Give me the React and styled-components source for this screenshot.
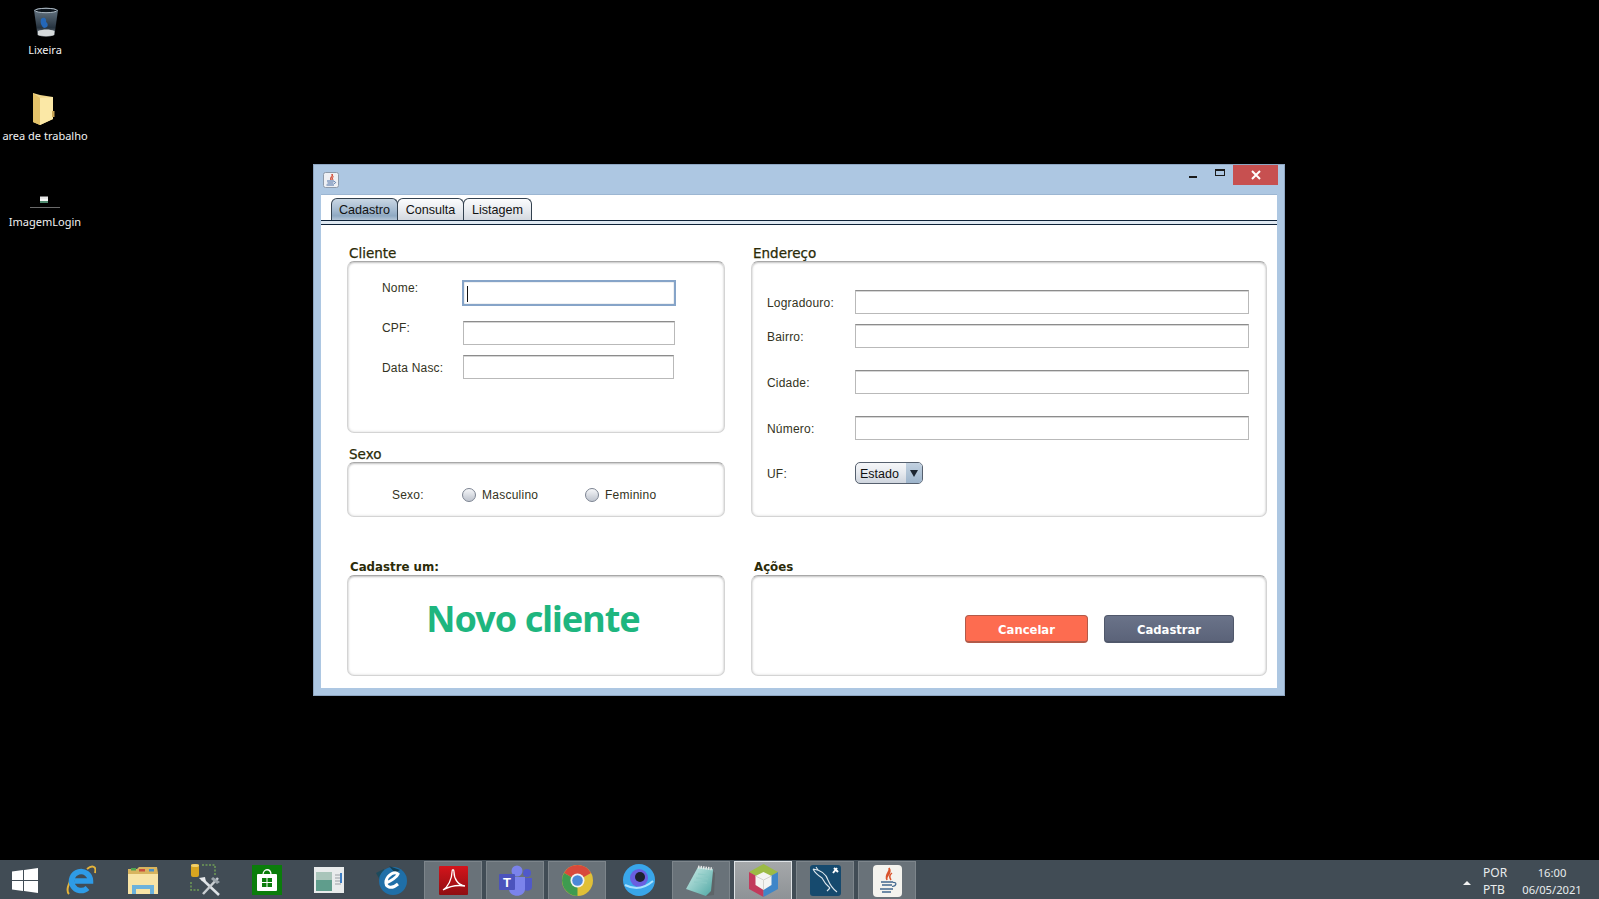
import React from "react";
import styled, { createGlobalStyle } from "styled-components";

const Global = createGlobalStyle`
  html, body { margin: 0; padding: 0; background: #000; overflow: hidden; }
  * { box-sizing: border-box; }
`;

const Screen = styled.div`
  width: 1599px; height: 899px; background: #000;
  display: flex; flex-direction: column;
  font-family: "Liberation Sans", Arial, sans-serif;
`;
const Desktop = styled.div`flex: 1; position: relative; min-height: 0;`;
const IconColumn = styled.div`display: flex; flex-direction: column; width: 90px;`;
const DesktopCell = styled.div`height: 86px; display: flex; flex-direction: column; align-items: center;`;
const DesktopArt = styled.div`
  height: 42px; width: 100%; display: flex; justify-content: center; align-items: flex-end;
  padding-bottom: ${p => p.$pb}px; padding-right: ${p => p.$pr || 0}px; padding-left: ${p => p.$pl || 0}px;
`;
const DesktopLabel = styled.div`
  color: #f2f2f2; font: 11px/16px "Noto Sans", sans-serif; white-space: nowrap;
`;

const Win = styled.div`
  position: absolute; left: 313px; top: 164px; width: 972px; height: 532px;
  background: #adc7e2; border: 1px solid #8ea6c2; display: flex; flex-direction: column;
`;
const TitleBar = styled.div`height: 29px; display: flex; padding-left: 9px; flex: none;`;
const TitleIcon = styled.div`margin-top: 7px; width: 16px; height: 15px;`;
const CaptionGroup = styled.div`margin-left: auto; margin-right: 6px; display: flex;`;
const Caption = styled.div`
  width: ${p => p.$w}px; height: 20px; display: flex; align-items: center; justify-content: center;
  background: ${p => p.$close ? "#c75050" : "transparent"};
`;
const MinGlyph = styled.span`width: 8px; height: 2px; background: #1a1a1a; margin-top: 4px;`;
const MaxGlyph = styled.span`width: 10px; height: 7px; border: 1px solid #1a1a1a; border-top-width: 2px; margin-bottom: 6px;`;

const Content = styled.div`
  flex: 1; margin: 0 7px 7px 7px; background: #fff; border-top: 1px solid #9cb6d2;
  display: flex; flex-direction: column; min-height: 0;
`;
const TabRow = styled.div`display: flex; padding: 3px 0 0 10px; height: 25px; flex: none;`;
const Tab = styled.div`
  height: 22px; width: ${p => p.$w}px; margin-left: ${p => p.$first ? 0 : -1}px;
  border: 1px solid #33414f; border-bottom: 0; border-radius: 6px 6px 0 0;
  font-size: 12.6px; line-height: 22px; text-align: center; color: #111;
  background: ${p => p.$active
    ? "linear-gradient(#c9d7e4, #a3b9cf 55%, #8fa9c2 80%, #b4c6d8)"
    : "linear-gradient(#fbfcfd, #e9ecf0 50%, #d3d8df)"};
`;
const TabBand = styled.div`
  height: 5px; flex: none; background: #dfe8f1;
  border-top: 1px solid #0e2238; border-bottom: 1px solid #0e2238;
`;
const Body = styled.div`
  padding: 18px 0 0 26px; display: grid; grid-template-columns: 378px 516px;
  column-gap: 26px; row-gap: 40px; align-content: start;
`;
const Col = styled.div`display: flex; flex-direction: column; gap: 11px;`;
const Group = styled.div`display: flex; flex-direction: column; ${p => p.$fill && "height: 100%;"}`;
const GroupTitle = styled.div`
  height: 18px; line-height: 20px; margin-left: ${p => p.$bold ? 3 : 2}px;
  font-family: "DejaVu Sans", sans-serif; color: #2b2b08;
  font-size: ${p => p.$bold ? 11.8 : 13.5}px; font-weight: ${p => p.$bold ? 700 : 400};
  -webkit-text-stroke: ${p => p.$bold ? 0 : 0.25}px #2b2b08;
`;
const Panel = styled.div`
  height: ${p => p.$h ? p.$h + "px" : "auto"}; flex: ${p => p.$h ? "none" : 1};
  border: 1px solid #d4d4d4; border-top-color: #a8a8a8; border-radius: 7px;
  box-shadow: inset 0 0 3px rgba(0,0,0,.14), inset 0 1px 2px rgba(0,0,0,.18);
  background: #fff;
`;
const ClientForm = styled(Panel)`padding: 18px 0 0 34px;`;
const AddressForm = styled(Panel)`padding: 28px 0 0 15px;`;
const SexRow = styled(Panel)`display: flex; align-items: center; padding: 10px 0 0 44px;`;
const Banner = styled(Panel)`
  display: flex; justify-content: center; align-items: center; padding: 0 6px 13px 0;
  color: #1eb67f; font: 700 36px/1 "Noto Sans", sans-serif; letter-spacing: -1px;
`;
const Actions = styled(Panel)`display: flex; justify-content: flex-end; gap: 16px; padding: 39px 32px 0 0;`;
const TopRow = styled.div`display: flex; align-items: flex-start; margin-top: ${p => p.$mt || 0}px;`;
const MidRow = styled.div`display: flex; align-items: center; height: 24px; margin-top: ${p => p.$mt || 0}px;`;
const FieldLabel = styled.div`
  width: ${p => p.$w}px; flex: none; font-size: 12px; line-height: 16px; color: #333322;
  letter-spacing: .2px; margin-top: ${p => p.$mt || 0}px;
`;
const Field = styled.div`
  width: ${p => p.$w}px; height: 24px; flex: none; background: #fff;
  border: 1px solid #b9b9b9; border-top: 1px solid #8c8c8c;
  box-shadow: inset 0 1px 0 #d6d6d6;
`;
const FocusField = styled.div`
  width: 214px; height: 26px; flex: none; background: #fff; padding: 4px 0 0 3px;
  border: 2px solid #86a4c8; box-shadow: inset 0 0 1px #55667a;
`;
const Caret = styled.div`width: 1px; height: 16px; background: #111;`;
const Select = styled.div`
  width: 68px; height: 22px; display: flex; margin-top: -2px; border: 1px solid #56606e; border-radius: 5px;
  overflow: hidden; font-size: 12.5px; line-height: 22px; color: #111;
  background: linear-gradient(#f5f6f8, #e8ebf0 45%, #cfd5de);
`;
const SelectText = styled.div`flex: 1; padding-left: 4px;`;
const SelectArrow = styled.div`
  width: 16px; display: flex; align-items: center; justify-content: center;
  background: linear-gradient(#c2d1e0, #9db4cb);
  &::after {
    content: ""; width: 0; height: 0;
    border-left: 4px solid transparent; border-right: 4px solid transparent; border-top: 7px solid #1c2530;
  }
`;
const Radio = styled.div`
  width: 14px; height: 14px; flex: none; border-radius: 50%; border: 1px solid #7b8391;
  background: linear-gradient(#f6f7f9, #c6cbd4 85%);
`;
const RadioText = styled.div`
  width: ${p => p.$w}px; flex: none; padding-left: 6px; font-size: 12px; color: #333322; letter-spacing: .25px;
`;
const Action = styled.div`
  width: ${p => p.$w}px; height: 28px; border-radius: 4px; text-align: center;
  color: #fff; font: 700 11.6px/29px "DejaVu Sans", sans-serif;
  background: ${p => p.$danger ? "#fd6c50" : "linear-gradient(#6a7389, #5b6379)"};
  border: 1px solid ${p => p.$danger ? "#b25a49" : "#50586b"};
  border-bottom-width: 2px;
`;

const Taskbar = styled.div`
  height: 39px; flex: none; background: #414c55; display: flex; align-items: stretch; padding-top: 1px; gap: 4px;
`;
const Start = styled.div`width: 48px; display: flex; align-items: center; justify-content: flex-end; padding: 0 10px 0 12px;`;
const Slot = styled.div`
  width: 58px; display: flex; align-items: center; justify-content: center;
  ${p => p.$state === "box" && "background: #697279; border: 1px solid #7d858b; border-bottom: 0;"}
  ${p => p.$state === "active" && "background: linear-gradient(#a5a8aa, #8e9296); border: 1px solid #dfe3e6; border-bottom: 0;"}
`;
const Tray = styled.div`
  margin-left: auto; display: flex; align-items: center; padding: 2px 16px 0 0;
  color: #e9ecee; font: 12px/17px "Noto Sans", sans-serif;
`;
const TrayCaret = styled.span`
  width: 0; height: 0; margin: 3px 12px 0 0;
  border-left: 4px solid transparent; border-right: 4px solid transparent; border-bottom: 4px solid #f2f2f2;
`;
const TrayLang = styled.div`width: 38px; display: flex; flex-direction: column;`;
const TrayClock = styled.div`width: 62px; text-align: center; display: flex; flex-direction: column; font-size: 11.2px;`;

/* ---------- drawn icons ---------- */
const RecycleBin = () => (
  <svg width="26" height="30" viewBox="0 0 26 30">
    <defs><linearGradient id="bn" x1="0" x2="0" y1="0" y2="1"><stop offset="0" stopColor="#6a7a88" /><stop offset=".7" stopColor="#26333f" /><stop offset="1" stopColor="#8e9498" /></linearGradient></defs>
    <path d="M1 3 C6 0 20 0 25 3 L21.500 28 C17 30 9 30 4.500 28 Z" fill="url(#bn)" />
    <ellipse cx="13" cy="3.500" rx="11" ry="2.200" fill="#0c141c" stroke="#aebac4" strokeWidth="1" />
    <path d="M8 12 C11 9 14 12 13 15 C16 17 15 21 11 21 C8 19 7 15 8 12Z" fill="#2467b8" />
    <path d="M5 24 C10 22 17 22 21.500 24 L21 28 C17 29.500 9 29.500 5 28Z" fill="#d6dadb" />
  </svg>
);
const DeskFolder = () => (
  <svg width="23" height="32" viewBox="0 0 23 32">
    <path d="M1 0 L8 2 L21 4 V26 L8 32 L1 29Z" fill="#f0d78c" />
    <path d="M8 5 L21 4 V26 L8 32Z" fill="#fbe8a6" />
    <path d="M1 0 L8 5 V32 L1 29Z" fill="#e4c36a" />
    <rect x="20" y="18" width="2.500" height="6" fill="#c9a657" />
  </svg>
);
const ImageThumb = () => (
  <svg width="30" height="14" viewBox="0 0 30 14">
    <rect x="10" y="2.500" width="8" height="2.500" fill="#e6e6e6" />
    <rect x="10" y="5" width="8" height="2" fill="#f7f7f7" />
    <rect x="10" y="7" width="8" height="2" fill="#4e8a6e" />
    <rect x="0" y="13" width="30" height="1" fill="#6a6a6a" />
  </svg>
);
const JavaGlyph = ({ size = 16 }) => (
  <svg width={size} height={size} viewBox="0 0 16 16">
    <rect x=".5" y=".5" width="15" height="15" rx="2" fill="#eef0f4" stroke="#8d9aaa" />
    <path d="M9 2 C10 4 6.500 5 8 8 C7 5.500 11 5 9 2Z M10.500 4.500 C9.500 5.500 9 6.500 10 8" fill="none" stroke="#d2452d" strokeWidth="1" />
    <path d="M4 9 H11 M4.500 11 H10.500 M3.500 13 H11" stroke="#4a6fa5" strokeWidth="1" />
    <path d="M11 9.500 C13 9.500 13 11.500 11 11.500" fill="none" stroke="#4a6fa5" />
  </svg>
);
const CloseGlyph = () => (
  <svg width="10" height="10" viewBox="0 0 10 10"><path d="M1 1 L9 9 M9 1 L1 9" stroke="#fff" strokeWidth="2" /></svg>
);
const WinLogo = () => (
  <svg width="26" height="25" viewBox="0 0 26 25" fill="#fff">
    <path d="M0 3.500 L11 2 V12 H0Z M12 1.900 L26 0 V12 H12Z M0 13 H11 V23 L0 21.500Z M12 13 H26 V25 L12 23.100Z" />
  </svg>
);
const IE = () => (
  <svg width="30" height="30" viewBox="0 0 30 30">
    <path d="M3 29 C0 26 2 18 7 12 M21 4 C26 0 31 1 29 8" fill="none" stroke="#e4b33a" strokeWidth="2" />
    <path d="M8.500 16 H24.500 A9.500 9.500 0 1 0 21.500 23" fill="none" stroke="#2e9be6" strokeWidth="5.500" />
  </svg>
);
const ExplorerIcon = () => (
  <svg width="32" height="30" viewBox="0 0 32 30">
    <path d="M1 4 H10 L12 2 H30 L31 8 V29 H1Z" fill="#d8b45e" />
    <rect x="4" y="3" width="5" height="2.500" fill="#4fa14f" />
    <rect x="12" y="4" width="6" height="2.500" fill="#c94f3d" />
    <rect x="22" y="4" width="5" height="2.500" fill="#4a90c8" />
    <path d="M1 9 H31 V29 H1Z" fill="#f8e4a6" />
    <path d="M5 29 V20 H27 V29 H23 V24 H9 V29Z" fill="#6cb2dc" />
  </svg>
);
const ToolsIcon = () => (
  <svg width="31" height="33" viewBox="0 0 31 33">
    <rect x="1" y="0" width="8" height="13" rx="2" fill="#d9a520" />
    <ellipse cx="5" cy="1.500" rx="4" ry="1.500" fill="#f2d06b" />
    <path d="M12 1 H25 V12 M1 18 V26 H10" fill="none" stroke="#6f9c55" strokeWidth="1.500" strokeDasharray="2 1.500" />
    <path d="M12 15 L29 31" stroke="#dde2e6" strokeWidth="2.500" />
    <path d="M28 14 L13 30" stroke="#c9ced2" strokeWidth="2.500" />
    <path d="M23 13 L30 18 L27 20 L21 15Z" fill="#9ba4aa" />
    <path d="M9 14 L15 13 L16 18 L12 17Z" fill="#e6e9eb" />
  </svg>
);
const StoreIcon = () => (
  <svg width="30" height="30" viewBox="0 0 30 30">
    <rect width="30" height="30" fill="#0b7d0b" />
    <path d="M11 10 C11 3 19 3 19 10" fill="none" stroke="#fff" strokeWidth="1.300" />
    <rect x="5" y="9" width="20" height="17" fill="#fff" rx="1" />
    <path d="M10 13 H14.500 V17 H10Z M15.500 13 H20 V17 H15.500Z M10 18 H14.500 V22 H10Z M15.500 18 H20 V22 H15.500Z" fill="#0b7d0b" />
  </svg>
);
const PanelAppIcon = () => (
  <svg width="30" height="26" viewBox="0 0 30 26">
    <rect width="30" height="26" fill="#e9ecec" />
    <rect x="2" y="5" width="16" height="19" fill="#5f9d8c" />
    <rect x="2" y="5" width="16" height="8" fill="#a9c5ba" />
    <path d="M21 8 H27 M21 11 H27 M21 14 H27 M21 17 H27" stroke="#9aa0a4" />
    <rect x="26" y="6" width="2" height="10" fill="#3f7fc4" />
  </svg>
);
const BlueE = () => (
  <svg width="32" height="32" viewBox="0 0 32 32">
    <path d="M1 9 L9 5 L14 12 L6 18Z" fill="#1d4a5c" />
    <circle cx="18" cy="17" r="14" fill="#1f6fa8" />
    <path d="M14 2 L25 6 L20 9Z" fill="#123f55" />
    <path d="M11 19 C16 17 22 13 23 10 C20 7 13 10 11 17 C10 23 16 26 23 20" fill="none" stroke="#fff" strokeWidth="3" />
  </svg>
);
const Acrobat = () => (
  <svg width="29" height="29" viewBox="0 0 29 29">
    <defs><linearGradient id="ar" x1="0" x2="0" y1="0" y2="1"><stop offset="0" stopColor="#d4141b" /><stop offset="1" stopColor="#8f0e12" /></linearGradient></defs>
    <rect width="29" height="29" rx="1" fill="url(#ar)" />
    <path d="M4 24 C9 21 13 13 13 6 C13 3 15 3 15 6 C15 13 19 19 26 20 C20 19 11 20 4 24Z" fill="none" stroke="#fff" strokeWidth="1.300" />
  </svg>
);
const Teams = () => (
  <svg width="33" height="31" viewBox="0 0 33 31">
    <circle cx="18" cy="6" r="5.500" fill="#7b83eb" />
    <circle cx="28" cy="8" r="4" fill="#5059c9" />
    <path d="M23 13 H33 V22 C33 27 24 27 23 22Z" fill="#5059c9" />
    <path d="M10 12 H26 V24 C26 33 10 33 10 24Z" fill="#7b83eb" />
    <rect x="0" y="9" width="16" height="16" rx="1" fill="#4b53bc" />
    <text x="8" y="22" textAnchor="middle" fill="#fff" fontFamily="Liberation Sans, sans-serif" fontWeight="700" fontSize="13">T</text>
  </svg>
);
const Chrome = () => (
  <svg width="31" height="31" viewBox="0 0 31 31">
    <circle cx="15.500" cy="15.500" r="15.500" fill="#e0c038" />
    <path d="M15.500 15.500 L2 8 A15.500 15.500 0 0 1 29 8Z" fill="#d8493b" />
    <path d="M15.500 15.500 L2 8 A15.500 15.500 0 0 0 15.500 31Z" fill="#3f9b50" />
    <circle cx="15.500" cy="15.500" r="7" fill="#f2f2f2" />
    <circle cx="15.500" cy="15.500" r="5.300" fill="#4b88d8" />
  </svg>
);
const GalaxyIcon = () => (
  <svg width="32" height="32" viewBox="0 0 32 32">
    <circle cx="16" cy="16" r="16" fill="#39a6ea" />
    <circle cx="16" cy="14" r="9" fill="#6a5fe0" />
    <circle cx="17" cy="13" r="5" fill="#1d2230" />
    <path d="M2 21 C12 26 22 24 30 17" fill="none" stroke="#a8e2ff" strokeWidth="2" />
  </svg>
);
const Notepad = () => (
  <svg width="32" height="32" viewBox="0 0 32 32">
    <defs><linearGradient id="np" x1="0" x2="1" y1="0" y2="1"><stop offset="0" stopColor="#cfeee9" /><stop offset="1" stopColor="#4fa7a4" /></linearGradient></defs>
    <path d="M13 2 L28 4 L28 26 L21 31 L1 24Z" fill="url(#np)" />
    <path d="M13 2 L28 4" stroke="#e6e8e8" strokeWidth="3" strokeDasharray="1.500 1" />
    <path d="M28 6 L30 8 L29 30 L21 31 L26 26Z" fill="#5e6468" />
    <path d="M13 9 L24 10 M11 13 L23 14 M9 17 L22 18" stroke="#8ccac5" />
  </svg>
);
const NetBeans = () => (
  <svg width="29" height="33" viewBox="0 0 29 33">
    <path d="M14.500 0 L29 8 L14.500 16 L0 8Z" fill="#9cbb45" />
    <path d="M0 8 L14.500 16 V33 L0 25Z" fill="#c23a5c" />
    <path d="M29 8 L14.500 16 V33 L29 25Z" fill="#3f86c8" />
    <path d="M14.500 8 L22.500 12 V21 L14.500 26 L6.500 21 V12Z" fill="#f4f4f2" />
    <path d="M6.500 12 L14.500 16 L22.500 12 M14.500 16 V26" stroke="#d4d4cf" fill="none" />
  </svg>
);
const MySql = () => (
  <svg width="31" height="31" viewBox="0 0 31 31">
    <rect width="31" height="31" rx="3" fill="#164a6e" />
    <path d="M3 4 C10 5 16 9 18 15 C20 20 23 24 27 27 M3 4 C5 8 9 11 12 13 C14 17 16 20 20 23 M8 5 L6 2 M20 23 L17 26" fill="none" stroke="#dfe8ee" strokeWidth="1.100" />
    <path d="M23 8 L27 3 M24 3 L28 7" stroke="#fff" strokeWidth="2" />
  </svg>
);
const JavaApp = () => (
  <svg width="29" height="32" viewBox="0 0 29 32">
    <rect width="29" height="32" rx="4" fill="#f4f3ee" />
    <path d="M16 3 C18 7 11 9 14 15 C12 10 20 9 16 3Z M19 8 C16 10 16 12 18 15" fill="none" stroke="#d9532c" strokeWidth="1.500" />
    <path d="M8 17 H20 M9 20 H19 M7 24 H20 M9 27 H18" stroke="#41688f" strokeWidth="1.400" />
    <path d="M20 17.500 C24 17 24 21 19 21.500" fill="none" stroke="#41688f" strokeWidth="1.200" />
  </svg>
);

const desktopItems = [
  { label: "Lixeira", art: <RecycleBin />, pb: 5, pl: 2 },
  { label: "area de trabalho", art: <DeskFolder />, pb: 3, pr: 4 },
  { label: "ImagemLogin", art: <ImageThumb />, pb: 6 },
];
const taskItems = [
  { icon: <IE /> }, { icon: <ExplorerIcon /> }, { icon: <ToolsIcon /> }, { icon: <StoreIcon /> },
  { icon: <PanelAppIcon /> }, { icon: <BlueE /> },
  { icon: <Acrobat />, state: "box" }, { icon: <Teams />, state: "box" }, { icon: <Chrome />, state: "box" },
  { icon: <GalaxyIcon /> }, { icon: <Notepad />, state: "box" }, { icon: <NetBeans />, state: "active" },
  { icon: <MySql />, state: "box" }, { icon: <JavaApp />, state: "box" },
];

export default function App() {
  return (
    <>
      <Global />
      <Screen>
        <Desktop>
          <IconColumn>
            {desktopItems.map(d => (
              <DesktopCell key={d.label}>
                <DesktopArt $pb={d.pb} $pr={d.pr} $pl={d.pl}>{d.art}</DesktopArt>
                <DesktopLabel>{d.label}</DesktopLabel>
              </DesktopCell>
            ))}
          </IconColumn>
          <Win>
            <TitleBar>
              <TitleIcon><JavaGlyph /></TitleIcon>
              <CaptionGroup>
                <Caption $w={27}><MinGlyph /></Caption>
                <Caption $w={27}><MaxGlyph /></Caption>
                <Caption $w={45} $close><CloseGlyph /></Caption>
              </CaptionGroup>
            </TitleBar>
            <Content>
              <TabRow>
                <Tab $first $active $w={67}>Cadastro</Tab>
                <Tab $w={67}>Consulta</Tab>
                <Tab $w={69}>Listagem</Tab>
              </TabRow>
              <TabBand />
              <Body>
                <Col>
                  <Group>
                    <GroupTitle>Cliente</GroupTitle>
                    <ClientForm $h={172}>
                      <TopRow>
                        <FieldLabel $w={80}>Nome:</FieldLabel>
                        <FocusField><Caret /></FocusField>
                      </TopRow>
                      <TopRow $mt={15}>
                        <FieldLabel $w={81} $mt={-1}>CPF:</FieldLabel>
                        <Field $w={212} />
                      </TopRow>
                      <TopRow $mt={10}>
                        <FieldLabel $w={81} $mt={5}>Data Nasc:</FieldLabel>
                        <Field $w={211} />
                      </TopRow>
                    </ClientForm>
                  </Group>
                  <Group>
                    <GroupTitle>Sexo</GroupTitle>
                    <SexRow $h={55}>
                      <FieldLabel $w={70}>Sexo:</FieldLabel>
                      <Radio />
                      <RadioText $w={109}>Masculino</RadioText>
                      <Radio />
                      <RadioText>Feminino</RadioText>
                    </SexRow>
                  </Group>
                </Col>
                <Group $fill>
                  <GroupTitle>Endereço</GroupTitle>
                  <AddressForm>
                    <MidRow>
                      <FieldLabel $w={88} $mt={2}>Logradouro:</FieldLabel>
                      <Field $w={394} />
                    </MidRow>
                    <MidRow $mt={10}>
                      <FieldLabel $w={88} $mt={2}>Bairro:</FieldLabel>
                      <Field $w={394} />
                    </MidRow>
                    <MidRow $mt={22}>
                      <FieldLabel $w={88} $mt={2}>Cidade:</FieldLabel>
                      <Field $w={394} />
                    </MidRow>
                    <MidRow $mt={22}>
                      <FieldLabel $w={88} $mt={2}>Número:</FieldLabel>
                      <Field $w={394} />
                    </MidRow>
                    <MidRow $mt={22}>
                      <FieldLabel $w={88}>UF:</FieldLabel>
                      <Select><SelectText>Estado</SelectText><SelectArrow /></Select>
                    </MidRow>
                  </AddressForm>
                </Group>
                <Group>
                  <GroupTitle $bold>Cadastre um:</GroupTitle>
                  <Banner $h={101}>Novo cliente</Banner>
                </Group>
                <Group>
                  <GroupTitle $bold>Ações</GroupTitle>
                  <Actions $h={101}>
                    <Action $danger $w={123}>Cancelar</Action>
                    <Action $w={130}>Cadastrar</Action>
                  </Actions>
                </Group>
              </Body>
            </Content>
          </Win>
        </Desktop>
        <Taskbar>
          <Start><WinLogo /></Start>
          {taskItems.map((t, i) => <Slot key={i} $state={t.state}>{t.icon}</Slot>)}
          <Tray>
            <TrayCaret />
            <TrayLang><span>POR</span><span>PTB</span></TrayLang>
            <TrayClock><span>16:00</span><span>06/05/2021</span></TrayClock>
          </Tray>
        </Taskbar>
      </Screen>
    </>
  );
}
